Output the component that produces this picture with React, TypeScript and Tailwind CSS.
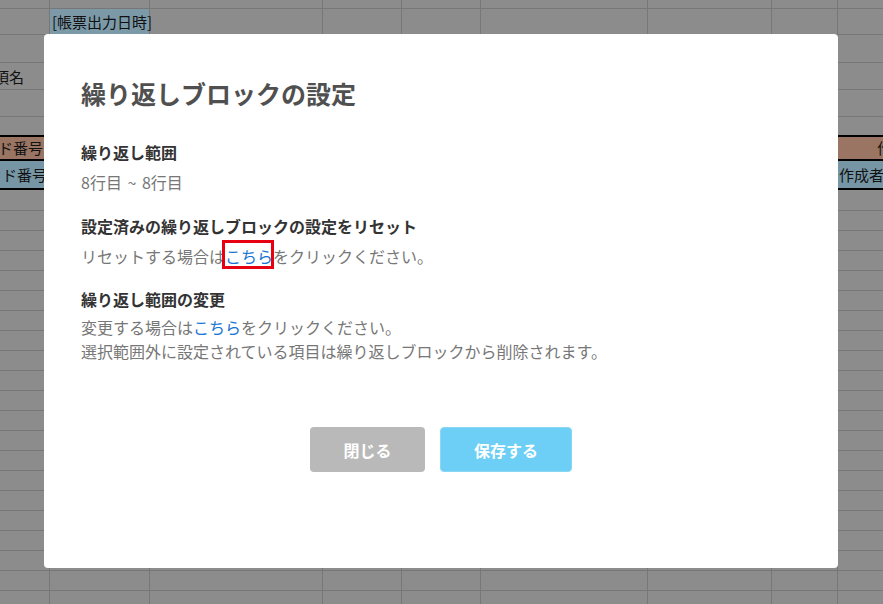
import React from "react";

const font = "font-['Noto_Sans_CJK_JP','Noto_Sans',sans-serif]";

// column widths of the sheet behind the dialog (each includes its right grid line)
const colWidths = [
  "w-[50px]",
  "w-[100px]",
  "w-[173px]",
  "w-[79px]",
  "w-[79px]",
  "w-[167px]",
  "w-[124px]",
  "w-[66px]",
  "flex-1",
];

function SheetRow({
  height,
  cells = {},
  last = false,
}: {
  height: string;
  cells?: Record<number, React.ReactNode>;
  last?: boolean;
}) {
  return (
    <div className={`flex ${height} ${last ? "" : "border-b border-[#777]"}`}>
      {colWidths.map((w, i) => (
        <div
          key={i}
          className={`${w} shrink-0 overflow-visible whitespace-nowrap border-r border-[#777] ${
            i === 8 ? "border-r-0" : ""
          }`}
        >
          {cells[i]}
        </div>
      ))}
    </div>
  );
}

function Sheet() {
  const rows = Array.from({ length: 21 });
  return (
    <div className={`h-full w-full overflow-hidden bg-[#8c8c8c] text-[15px] text-[#111] ${font}`}>
      <SheetRow height="h-[9px]" />
      <SheetRow
        height="h-[26px]"
        cells={{
          1: (
            <div className="h-full bg-[#7c99a8] pl-[2px] leading-[26px]">[帳票出力日時]</div>
          ),
        }}
      />
      <SheetRow height="h-[28px]" />
      <SheetRow
        height="h-[27px]"
        cells={{ 0: <div className="-ml-[6px] leading-[27px]">項名</div> }}
      />
      <SheetRow height="h-[27px]" />
      <SheetRow height="h-[18px]" last />

      {/* header band with thick borders */}
      <div className="flex h-[24px] whitespace-nowrap border-t-2 border-black bg-[#9a7563] leading-[22px]">
        <span className="-ml-[2px] w-[840px] shrink-0">ド番号</span>
        <span className="shrink-0 pl-[39px]">作成者</span>
      </div>
      <div className="flex h-[31px] whitespace-nowrap border-y-2 border-black bg-[#7696a5] leading-[27px]">
        <span className="ml-[2px] w-[836px] shrink-0">ド番号</span>
        <span className="shrink-0 pl-[1px]">作成者</span>
      </div>

      <SheetRow height="h-[21px]" />
      {rows.map((_, i) => (
        <SheetRow key={i} height="h-[20px]" />
      ))}
    </div>
  );
}

function Section({ title, children }: { title: string; children: React.ReactNode }) {
  return (
    <div className="mt-5 first:mt-0">
      <h3 className="mb-1.5 text-[16px] font-bold leading-6 text-[#333]">{title}</h3>
      <div className="text-[16px] leading-6 text-[#777]">{children}</div>
    </div>
  );
}

export default function App() {
  return (
    <div className="relative h-[604px] w-[883px] overflow-hidden">
      <Sheet />

      <div className={`absolute inset-0 pl-[44px] pt-[34px] ${font}`}>
        <div className="flex h-[534px] w-[794px] flex-col rounded-[4px] bg-white px-[37px] pt-[43px]">
          <h2 className="text-[25px] font-bold leading-8 text-[#505050]">繰り返しブロックの設定</h2>

          <div className="mt-[31px]">
            <Section title="繰り返し範囲">
              8行目 <span className="mx-[2px]">~</span> 8行目
            </Section>
            <Section title="設定済みの繰り返しブロックの設定をリセット">
              リセットする場合は
              <span className="relative inline-block text-[#1774d1]">
                こちら
                <span className="absolute -top-[4px] -bottom-[1px] -left-[3px] -right-[1px] border-[3px] border-[#e60012]" />
              </span>
              をクリックください。
            </Section>
            <div className="mt-[19px]">
              <h3 className="mb-1 text-[16px] font-bold leading-6 text-[#333]">繰り返し範囲の変更</h3>
              <div className="text-[16px] leading-6 text-[#777]">
                変更する場合は<span className="text-[#1774d1]">こちら</span>をクリックください。
                <br />
                選択範囲外に設定されている項目は繰り返しブロックから削除されます。
              </div>
            </div>
          </div>

          <div className="mt-[64px] flex justify-center gap-[15px]">
            <button className="h-[45px] w-[115px] rounded-[4px] bg-[#b9b9b9] text-[16px] font-bold text-white">
              閉じる
            </button>
            <button className="h-[45px] w-[132px] rounded-[4px] border border-[#8ad6f5] bg-[#6dcff6] text-[16px] font-bold text-white">
              保存する
            </button>
          </div>
        </div>
      </div>
    </div>
  );
}
